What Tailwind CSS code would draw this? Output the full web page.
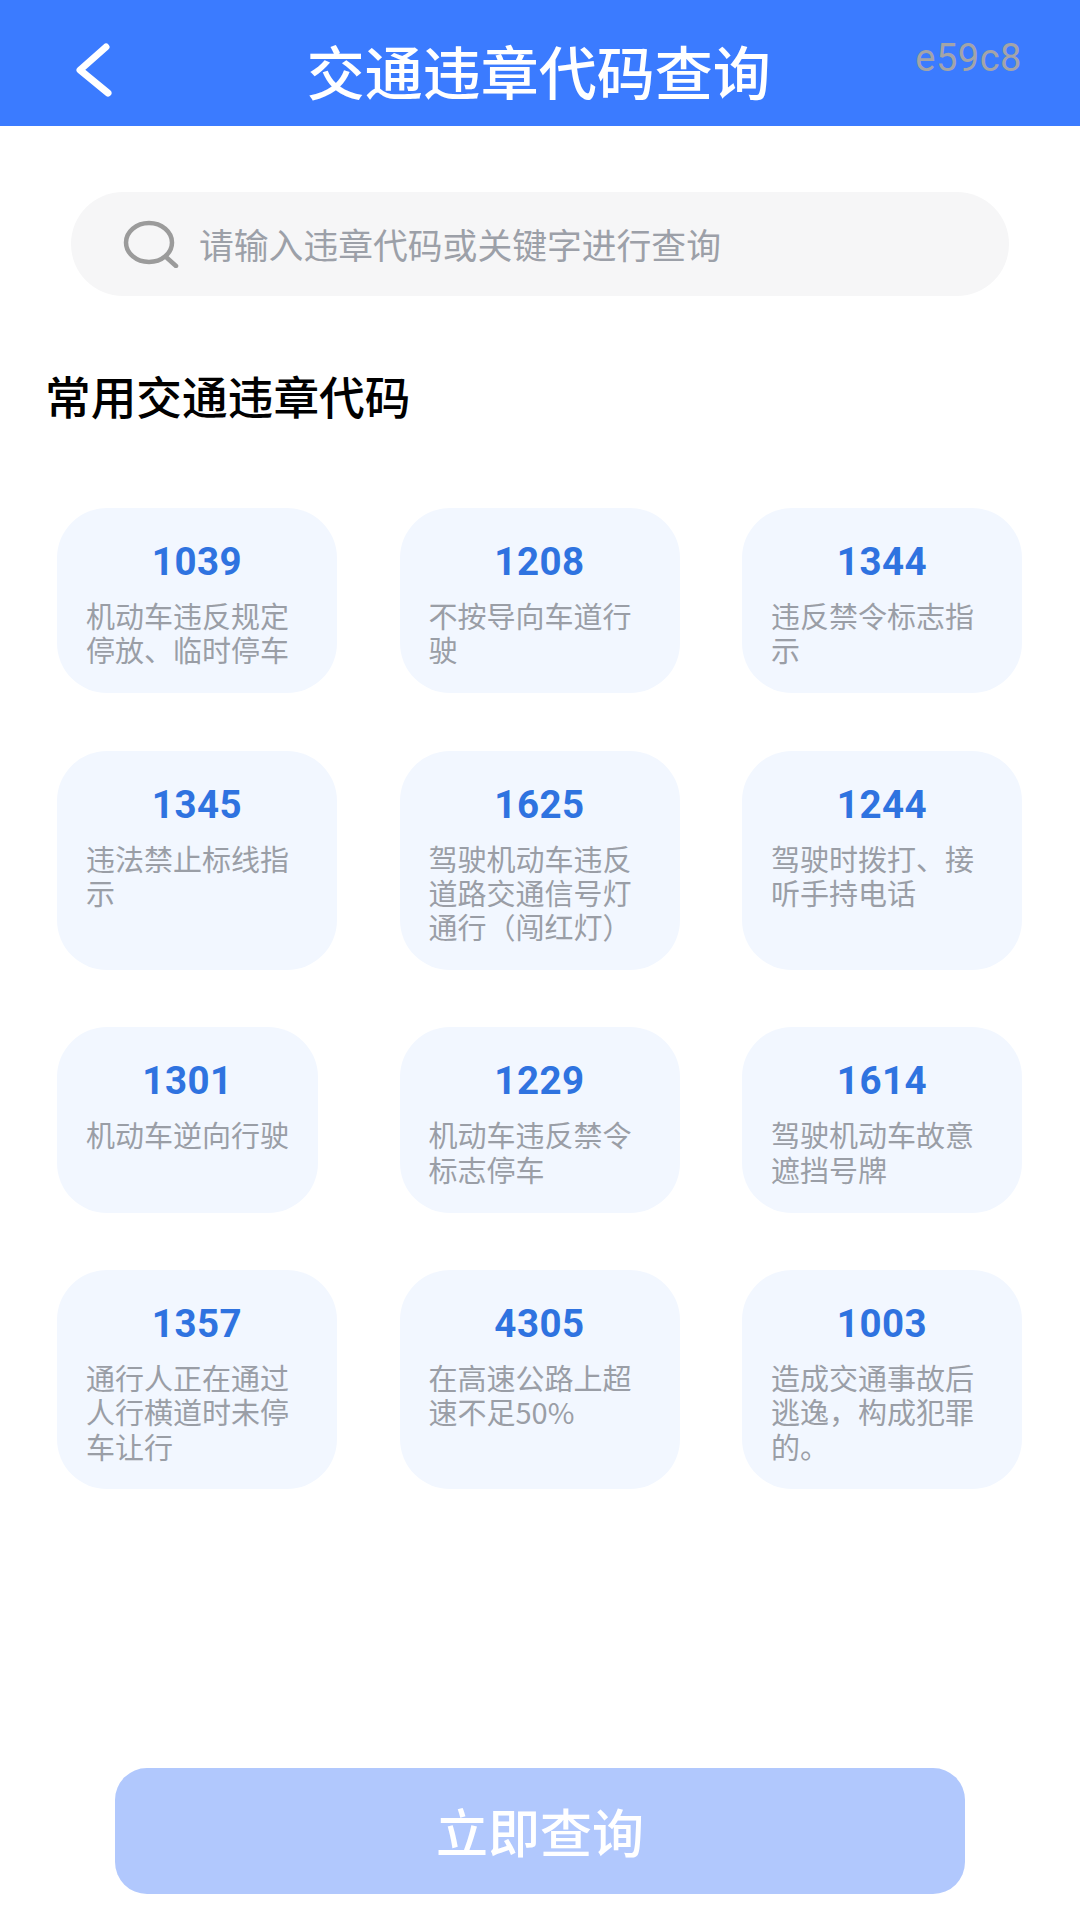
<!DOCTYPE html>
<html lang="zh-CN">
<head>
<meta charset="utf-8">
<script src="https://cdn.jsdelivr.net/npm/@tailwindcss/browser@4"></script>
</head>
<body class="bg-white font-['Noto_Sans_CJK_SC','Noto_Sans',sans-serif]">
<div class="w-[1080px] h-[1920px] flex flex-col">
  <header class="h-[126px] bg-[#3b7bff] flex items-center justify-between pl-[76px] pr-[58px] shrink-0">
    <svg class="w-[36px] h-[54px] shrink-0 mt-[14px]" viewBox="0 0 36 54" fill="none" stroke="#fff" stroke-width="7" stroke-linecap="round" stroke-linejoin="round"><path d="M30 4 L4 27 L32 50"/></svg>
    <h1 class="text-[58px] leading-[72px] font-medium text-white ml-[50px] mt-[14px]">交通违章代码查询</h1>
    <span class="font-['Roboto'] text-[38px] leading-[40px] text-[#a3a4a8] tracking-[0.5px] -mt-[11px]">e59c8</span>
  </header>
  <main class="flex-1 flex flex-col">
    <div class="mt-[66px] mx-[71px] h-[104px] rounded-full bg-[#f6f6f7] flex items-center pl-[52px] gap-[20px]">
      <svg class="w-[56px] h-[48px] shrink-0" viewBox="0 0 56 48" fill="none" stroke="#9b9b9b" stroke-width="4.5" stroke-linecap="round"><ellipse cx="26" cy="22.5" rx="23" ry="19.5"/><path d="M43 37 L53 46"/></svg>
      <span class="text-[34.8px] leading-[40px] text-[#9ca0a8]">请输入违章代码或关键字进行查询</span>
    </div>
    <h2 class="mt-[71px] ml-[45px] text-[45.7px] leading-[56px] font-medium text-black">常用交通违章代码</h2>
    <div class="mt-[85px] ml-[57px] grid grid-cols-[280px_280px_280px] gap-x-[62.5px] gap-y-[57.5px] justify-items-start">
      <div class="w-full rounded-[50px] bg-[#f2f7ff] px-[29px] pt-[30px] pb-[26.5px]"><p class="text-center font-['Roboto'] font-bold text-[38.5px] leading-[48px] text-[#2f73e0] tracking-[0.5px]">1039</p><p class="text-[29px] leading-[34.3px] text-[#9a9ea6] mt-[12px]">机动车违反规定停放、临时停车</p></div>
      <div class="w-full rounded-[50px] bg-[#f2f7ff] px-[29px] pt-[30px] pb-[26.5px]"><p class="text-center font-['Roboto'] font-bold text-[38.5px] leading-[48px] text-[#2f73e0] tracking-[0.5px]">1208</p><p class="text-[29px] leading-[34.3px] text-[#9a9ea6] mt-[12px]">不按导向车道行驶</p></div>
      <div class="w-full rounded-[50px] bg-[#f2f7ff] px-[29px] pt-[30px] pb-[26.5px]"><p class="text-center font-['Roboto'] font-bold text-[38.5px] leading-[48px] text-[#2f73e0] tracking-[0.5px]">1344</p><p class="text-[29px] leading-[34.3px] text-[#9a9ea6] mt-[12px]">违反禁令标志指示</p></div>
      <div class="w-full rounded-[50px] bg-[#f2f7ff] px-[29px] pt-[30px] pb-[26.5px]"><p class="text-center font-['Roboto'] font-bold text-[38.5px] leading-[48px] text-[#2f73e0] tracking-[0.5px]">1345</p><p class="text-[29px] leading-[34.3px] text-[#9a9ea6] mt-[12px]">违法禁止标线指示</p></div>
      <div class="w-full rounded-[50px] bg-[#f2f7ff] px-[29px] pt-[30px] pb-[26.5px]"><p class="text-center font-['Roboto'] font-bold text-[38.5px] leading-[48px] text-[#2f73e0] tracking-[0.5px]">1625</p><p class="text-[29px] leading-[34.3px] text-[#9a9ea6] mt-[12px]">驾驶机动车违反道路交通信号灯通行（闯红灯）</p></div>
      <div class="w-full rounded-[50px] bg-[#f2f7ff] px-[29px] pt-[30px] pb-[26.5px]"><p class="text-center font-['Roboto'] font-bold text-[38.5px] leading-[48px] text-[#2f73e0] tracking-[0.5px]">1244</p><p class="text-[29px] leading-[34.3px] text-[#9a9ea6] mt-[12px]">驾驶时拨打、接听手持电话</p></div>
      <div class="w-[261px] rounded-[50px] bg-[#f2f7ff] px-[29px] pt-[30px] pb-[26.5px]"><p class="text-center font-['Roboto'] font-bold text-[38.5px] leading-[48px] text-[#2f73e0] tracking-[0.5px]">1301</p><p class="text-[29px] leading-[34.3px] text-[#9a9ea6] mt-[12px]">机动车逆向行驶</p></div>
      <div class="w-full rounded-[50px] bg-[#f2f7ff] px-[29px] pt-[30px] pb-[26.5px]"><p class="text-center font-['Roboto'] font-bold text-[38.5px] leading-[48px] text-[#2f73e0] tracking-[0.5px]">1229</p><p class="text-[29px] leading-[34.3px] text-[#9a9ea6] mt-[12px]">机动车违反禁令标志停车</p></div>
      <div class="w-full rounded-[50px] bg-[#f2f7ff] px-[29px] pt-[30px] pb-[26.5px]"><p class="text-center font-['Roboto'] font-bold text-[38.5px] leading-[48px] text-[#2f73e0] tracking-[0.5px]">1614</p><p class="text-[29px] leading-[34.3px] text-[#9a9ea6] mt-[12px]">驾驶机动车故意遮挡号牌</p></div>
      <div class="w-full rounded-[50px] bg-[#f2f7ff] px-[29px] pt-[30px] pb-[26.5px]"><p class="text-center font-['Roboto'] font-bold text-[38.5px] leading-[48px] text-[#2f73e0] tracking-[0.5px]">1357</p><p class="text-[29px] leading-[34.3px] text-[#9a9ea6] mt-[12px]">通行人正在通过人行横道时未停车让行</p></div>
      <div class="w-full rounded-[50px] bg-[#f2f7ff] px-[29px] pt-[30px] pb-[26.5px]"><p class="text-center font-['Roboto'] font-bold text-[38.5px] leading-[48px] text-[#2f73e0] tracking-[0.5px]">4305</p><p class="text-[29px] leading-[34.3px] text-[#9a9ea6] mt-[12px]">在高速公路上超速不足50%</p></div>
      <div class="w-full rounded-[50px] bg-[#f2f7ff] px-[29px] pt-[30px] pb-[26.5px]"><p class="text-center font-['Roboto'] font-bold text-[38.5px] leading-[48px] text-[#2f73e0] tracking-[0.5px]">1003</p><p class="text-[29px] leading-[34.3px] text-[#9a9ea6] mt-[12px]">造成交通事故后逃逸，构成犯罪的。</p></div>
    </div>
    <button class="mt-auto mb-[26px] mx-[115px] h-[126px] rounded-[32px] bg-[#b1c8fd] text-white text-[52px] font-medium">立即查询</button>
  </main>
</div>
</body>
</html>
